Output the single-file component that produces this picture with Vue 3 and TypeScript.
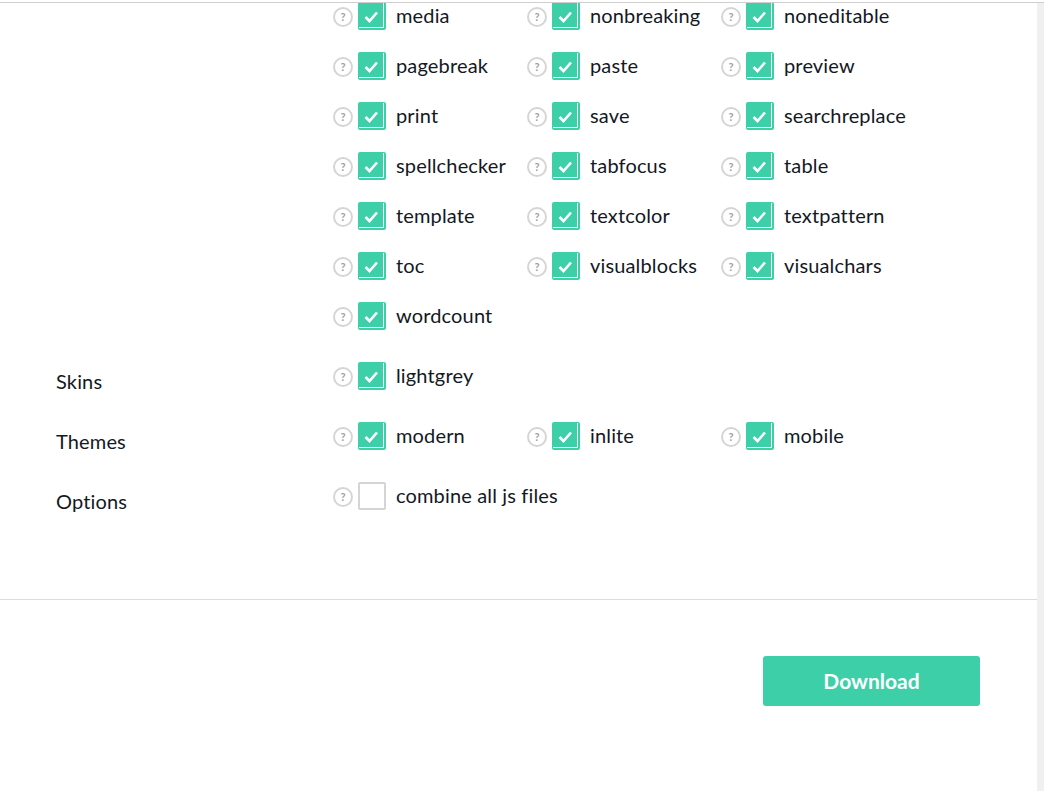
<template>
  <div class="page">
    <div class="content">
      <div class="scroll-area">
        <section class="group">
          <div class="group-label"></div>
          <div class="options">
            <div v-for="name in plugins" :key="name" class="option">
              <span class="help">?</span>
              <svg class="check" width="28" height="28" viewBox="0 0 28 28">
                <rect width="28" height="28" rx="2" fill="#3dd0a8" />
                <path d="M1 25.5H25.5V1" fill="none" stroke="#fff" stroke-width="1" />
                <path d="M7.5 15l4 4L19 10.5" fill="none" stroke="#fff" stroke-width="2.6" />
              </svg>
              <span class="name">{{ name }}</span>
            </div>
          </div>
        </section>
        <section v-for="group in groups" :key="group.label" class="group">
          <div class="group-label">{{ group.label }}</div>
          <div class="options">
            <div v-for="item in group.items" :key="item" class="option">
              <span class="help">?</span>
              <svg v-if="group.checked" class="check" width="28" height="28" viewBox="0 0 28 28">
                <rect width="28" height="28" rx="2" fill="#3dd0a8" />
                <path d="M1 25.5H25.5V1" fill="none" stroke="#fff" stroke-width="1" />
                <path d="M7.5 15l4 4L19 10.5" fill="none" stroke="#fff" stroke-width="2.6" />
              </svg>
              <span v-else class="check-empty"></span>
              <span class="name">{{ item }}</span>
            </div>
          </div>
        </section>
      </div>
      <div class="footer">
        <button class="download">Download</button>
      </div>
    </div>
    <div class="scrollbar"></div>
  </div>
</template>

<script setup lang="ts">
const plugins = [
  'media', 'nonbreaking', 'noneditable',
  'pagebreak', 'paste', 'preview',
  'print', 'save', 'searchreplace',
  'spellchecker', 'tabfocus', 'table',
  'template', 'textcolor', 'textpattern',
  'toc', 'visualblocks', 'visualchars',
  'wordcount'
];

const groups = [
  { label: 'Skins', items: ['lightgrey'], checked: true },
  { label: 'Themes', items: ['modern', 'inlite', 'mobile'], checked: true },
  { label: 'Options', items: ['combine all js files'], checked: false }
];
</script>

<style>
html, body { margin: 0; background: #fff; overflow: hidden; }
</style>

<style scoped>
.page {
  display: flex;
  height: 789px;
  margin-top: 2px;
  box-sizing: border-box;
  border-top: 1px solid #cfcfcf;
  font-family: Lato, "Open Sans", sans-serif;
  color: #14181f;
  overflow: hidden;
}
.content { flex: 1; min-width: 0; }
.scroll-area {
  height: 597px;
  margin-top: -1px;
  overflow: hidden;
}
.scrollbar { width: 7px; background: #f0f0f0; }
.group { display: flex; margin-bottom: 10px; }
.group-label {
  width: 333px;
  height: 50px;
  box-sizing: border-box;
  padding: 7px 0 0 56px;
  font-size: 20px;
  line-height: 24px;
  letter-spacing: 0.15px;
}
.options { display: flex; flex-wrap: wrap; width: 582px; }
.option {
  width: 194px;
  height: 50px;
  display: flex;
  align-items: flex-start;
}
.help {
  flex: none;
  width: 20px;
  height: 20px;
  box-sizing: border-box;
  margin-top: 5px;
  border: 2px solid #d5d5d5;
  border-radius: 50%;
  color: #a0a0a0;
  font-size: 11px;
  font-weight: 700;
  line-height: 16px;
  text-align: center;
}
.check { margin-left: 5px; flex: none; }
.check-empty {
  flex: none;
  margin-left: 5px;
  width: 28px;
  height: 28px;
  box-sizing: border-box;
  border: 2px solid #d5d5d5;
  border-radius: 2px;
}
.name {
  margin-left: 10px;
  font-size: 20px;
  line-height: 26px;
  letter-spacing: 0.15px;
  white-space: nowrap;
}
.footer {
  height: 192px;
  box-sizing: border-box;
  border-top: 1px solid #dcdcdc;
  padding: 56px 57px 0 0;
  display: flex;
  justify-content: flex-end;
  align-items: flex-start;
}
.download {
  width: 217px;
  height: 50px;
  border: none;
  border-radius: 3px;
  background: #3dd0a8;
  color: #fff;
  font-family: inherit;
  font-size: 21px;
  font-weight: 700;
  padding: 0 0 2px;
  cursor: pointer;
}
</style>
